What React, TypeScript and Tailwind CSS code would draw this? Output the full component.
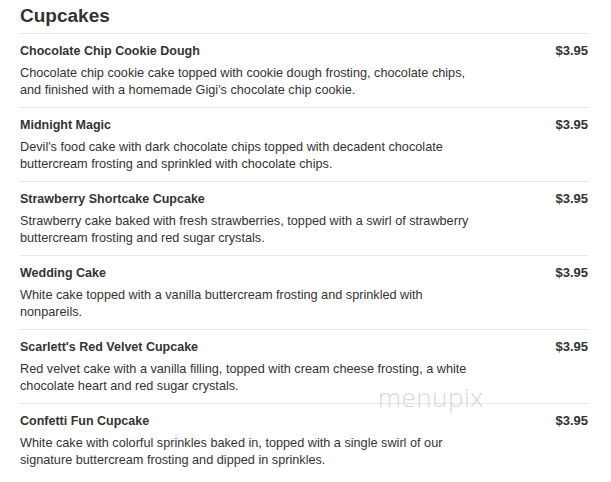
const ITEMS = [
    {
        name: "Chocolate Chip Cookie Dough",
        desc: ["Chocolate chip cookie cake topped with cookie dough frosting, chocolate chips,", "and finished with a homemade Gigi's chocolate chip cookie."],
        price: "$3.95",
    },
    {
        name: "Midnight Magic",
        desc: ["Devil's food cake with dark chocolate chips topped with decadent chocolate", "buttercream frosting and sprinkled with chocolate chips."],
        price: "$3.95",
    },
    {
        name: "Strawberry Shortcake Cupcake",
        desc: ["Strawberry cake baked with fresh strawberries, topped with a swirl of strawberry", "buttercream frosting and red sugar crystals."],
        price: "$3.95",
    },
    {
        name: "Wedding Cake",
        desc: ["White cake topped with a vanilla buttercream frosting and sprinkled with", "nonpareils."],
        price: "$3.95",
    },
    {
        name: "Scarlett's Red Velvet Cupcake",
        desc: ["Red velvet cake with a vanilla filling, topped with cream cheese frosting, a white", "chocolate heart and red sugar crystals."],
        price: "$3.95",
    },
    {
        name: "Confetti Fun Cupcake",
        desc: ["White cake with colorful sprinkles baked in, topped with a single swirl of our", "signature buttercream frosting and dipped in sprinkles."],
        price: "$3.95",
    },
];

export default function App() {
    return (
        <div className="relative min-h-screen bg-white text-[#333] font-['Liberation_Sans',Arial,sans-serif]">
            <div className="pl-[20px] pr-[23px]">

                {/* Header */}
                <h1 className="pt-[4px] pb-[5px] text-[19px] leading-[24px] font-bold">Cupcakes</h1>

                {/* Menu items */}
                {ITEMS.map((item) => (
                    <div key={item.name} className="border-t border-[#e8e8e8] pt-[9px] pb-[8px]">
                        <div className="flex justify-between items-start">
                            <h3 className="text-[12.5px] leading-[16px] font-bold">{item.name}</h3>
                            <span className="text-[13px] leading-[16px] font-bold">{item.price}</span>
                        </div>
                        <p className="mt-[6px] text-[12.7px] leading-[17px]">
                            {item.desc.map((line, i) => (
                                <span key={i} className="block whitespace-nowrap">{line}</span>
                            ))}
                        </p>
                    </div>
                ))}
            </div>

            {/* watermark */}
            <div className="absolute left-[378px] top-[382px] text-[26px] leading-[30px] tracking-[0.5px] font-light text-[#d9d9d9] font-['Open_Sans',sans-serif] select-none pointer-events-none">
                menupix
            </div>
        </div>
    );
}
